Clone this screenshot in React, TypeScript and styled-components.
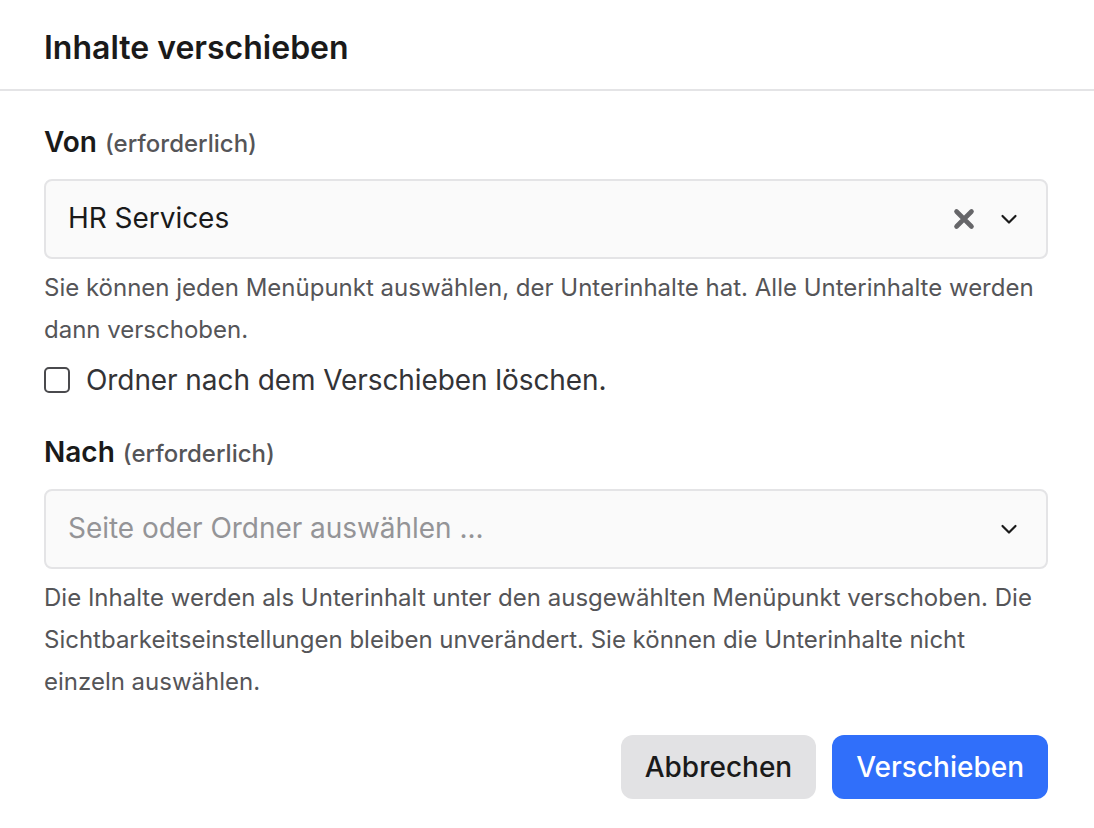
import React from 'react';
import styled, { createGlobalStyle } from 'styled-components';

const GlobalStyle = createGlobalStyle`
  html, body {
    margin: 0;
    padding: 0;
    background: #fff;
    font-family: Inter, "Liberation Sans", sans-serif;
  }
  * { box-sizing: border-box; }
`;

const Dialog = styled.div`
  width: 1094px;
  height: 828px;
  background: #fff;
  display: flex;
  flex-direction: column;
  color: #1a1a1a;
`;

const Header = styled.header`
  height: 91px;
  padding: 0 44px;
  display: flex;
  align-items: center;
  border-bottom: 2px solid #e4e4e6;
`;

const Title = styled.h1`
  margin: 0 0 -6px;
  font-size: 32px;
  font-weight: 600;
  color: #1a1a1a;
`;

const Body = styled.div`
  flex: 1;
  padding: 34px 46px 29px 44px;
  display: flex;
  flex-direction: column;
`;

const Label = styled.div<{ $mt?: number }>`
  display: flex;
  align-items: baseline;
  gap: 8px;
  height: 38px;
  margin-top: ${p => p.$mt ?? 0}px;
`;

const LabelName = styled.span`
  font-size: 28px;
  font-weight: 600;
  color: #1a1a1a;
`;

const LabelHint = styled.span`
  font-size: 24px;
  font-weight: 500;
  color: #555558;
`;

const Select = styled.div`
  height: 80px;
  margin-top: 16px;
  padding: 0 25px 0 22px;
  display: flex;
  align-items: center;
  background: #fafafa;
  border: 2px solid #e4e4e6;
  border-radius: 8px;
`;

const SelectValue = styled.span<{ $placeholder?: boolean }>`
  flex: 1;
  font-size: 28px;
  letter-spacing: -0.04px;
  color: ${p => (p.$placeholder ? '#949497' : '#1a1a1a')};
  margin-top: -2px;
`;

const SelectIcons = styled.span`
  display: flex;
  align-items: center;
  gap: 21px;
`;

const Help = styled.p`
  margin: 8px 0 0;
  font-size: 24px;
  line-height: 42px;
  color: #555558;
`;

const CheckRow = styled.label`
  display: flex;
  align-items: center;
  gap: 16px;
  height: 40px;
  margin-top: 9px;
  font-size: 28px;
  letter-spacing: -0.08px;
  color: #333336;
`;

const CheckBox = styled.span`
  width: 26px;
  height: 26px;
  border: 2px solid #4a4a4d;
  border-radius: 5px;
  background: #fff;
`;

const Footer = styled.div`
  display: flex;
  justify-content: flex-end;
  gap: 16px;
  margin-top: auto;
`;

const Button = styled.button<{ $primary?: boolean }>`
  height: 64px;
  padding: 0 24px;
  border: 0;
  border-radius: 12px;
  font-family: inherit;
  font-size: 28px;
  font-weight: 500;
  background: ${p => (p.$primary ? '#306ffa' : '#e2e2e4')};
  color: ${p => (p.$primary ? '#fff' : '#1a1a1a')};
`;

const Chevron = () => (
  <svg width="24" height="24" viewBox="0 0 24 24" fill="none" stroke="#1a1a1a" strokeWidth="2.2" strokeLinecap="round" strokeLinejoin="round">
    <path d="M5.5 9l6.5 6.5L18.500 9" />
  </svg>
);

const ClearIcon = () => (
  <svg width="24" height="24" viewBox="0 0 24 24" fill="none" stroke="#666669" strokeWidth="4.6" strokeLinecap="round">
    <path d="M4.500 4.500l15 15M19.500 4.500l-15 15" />
  </svg>
);

export default function App() {
  return (
    <Dialog>
      <GlobalStyle />
      <Header>
        <Title>Inhalte verschieben</Title>
      </Header>
      <Body>
        <Label>
          <LabelName>Von</LabelName>
          <LabelHint>(erforderlich)</LabelHint>
        </Label>
        <Select>
          <SelectValue>HR Services</SelectValue>
          <SelectIcons>
            <ClearIcon />
            <Chevron />
          </SelectIcons>
        </Select>
        <Help>Sie können jeden Menüpunkt auswählen, der Unterinhalte hat. Alle Unterinhalte werden dann verschoben.</Help>
        <CheckRow>
          <CheckBox />
          Ordner nach dem Verschieben löschen.
        </CheckRow>
        <Label $mt={35}>
          <LabelName>Nach</LabelName>
          <LabelHint>(erforderlich)</LabelHint>
        </Label>
        <Select>
          <SelectValue $placeholder>Seite oder Ordner auswählen ...</SelectValue>
          <SelectIcons>
            <Chevron />
          </SelectIcons>
        </Select>
        <Help>Die Inhalte werden als Unterinhalt unter den ausgewählten Menüpunkt verschoben. Die Sichtbarkeitseinstellungen bleiben unverändert. Sie können die Unterinhalte nicht einzeln auswählen.</Help>
        <Footer>
          <Button>Abbrechen</Button>
          <Button $primary>Verschieben</Button>
        </Footer>
      </Body>
    </Dialog>
  );
}
